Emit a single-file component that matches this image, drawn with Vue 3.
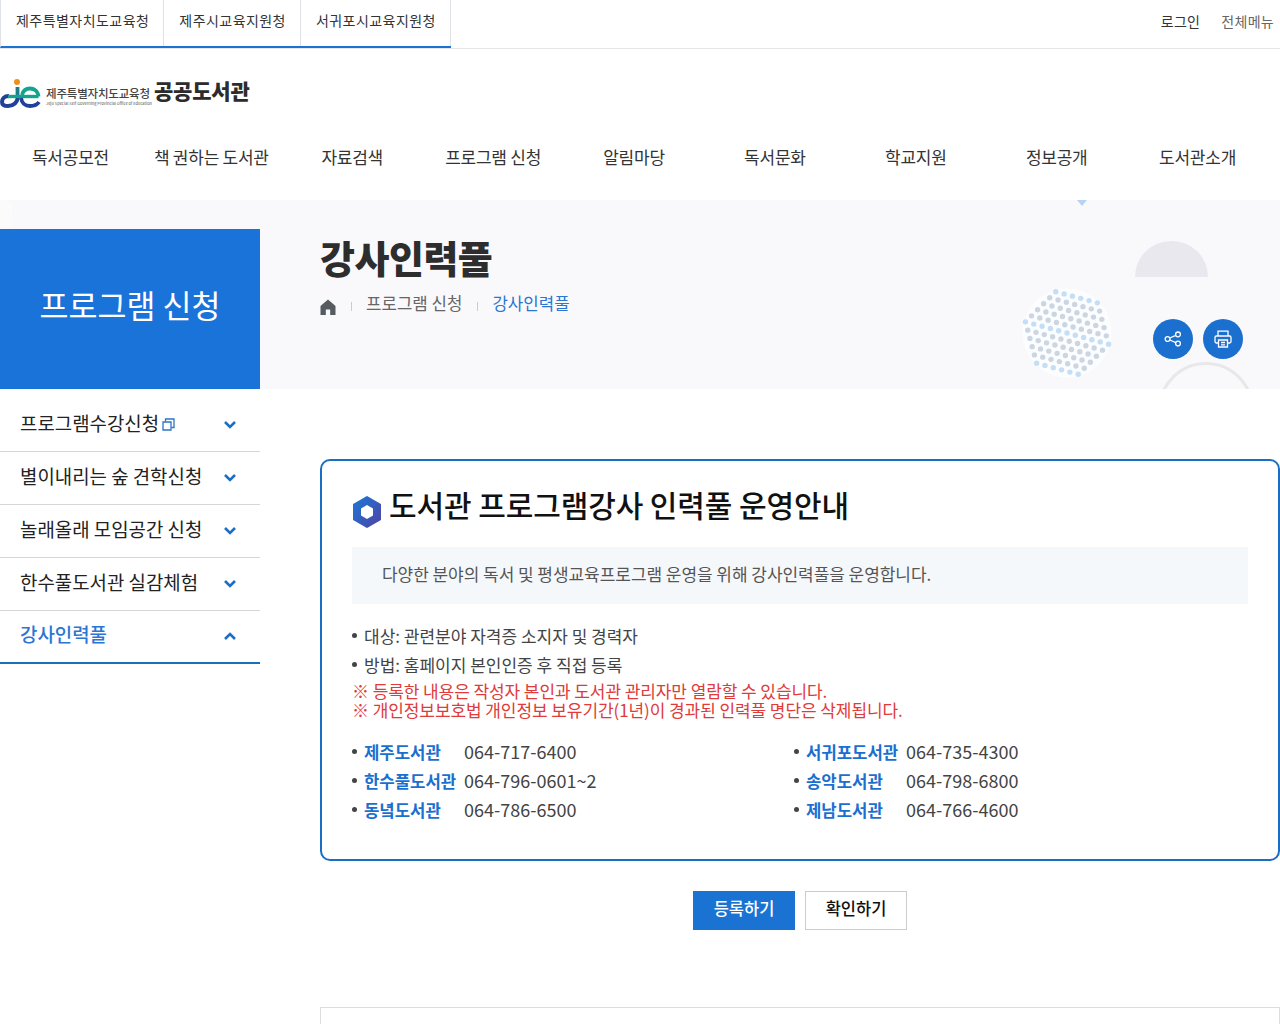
<template>
  <div class="page">
    <header class="topbar">
      <ul class="tabs">
        <li v-for="tab in tabs" :key="tab">{{ tab }}</li>
      </ul>
      <div class="util">
        <span>로그인</span>
        <span class="all">전체메뉴</span>
      </div>
    </header>

    <div class="logo-row">
      <svg class="logo-mark" width="42" height="32" viewBox="0 0 42 32" fill="none">
        <circle cx="17" cy="5" r="3" fill="#ee8f1c" />
        <path d="M17.5 10 V20" stroke="#1b7d8a" stroke-width="3.8" />
        <path d="M9 19 C4 19 2 22 2 25 C2 28 5 29 8 29 C13 29 17 26 18 20" stroke="#21409a" stroke-width="4" />
        <path d="M8 19.5 H38.5" stroke="#12a58c" stroke-width="3.4" />
        <path d="M38.5 19.5 C38 14 34 11.5 30 11.5 C26 11.5 23 14 22 18" stroke="#12a58c" stroke-width="3.8" />
        <path d="M21 21 C22 27 26 29 30 29 C34 29 37 28 39 25" stroke="#21409a" stroke-width="3.8" />
      </svg>
      <div class="logo-org">
        <strong>제주특별자치도교육청</strong>
        <small>Jeju Special Self Governing Provincial Office of Education</small>
      </div>
      <div class="logo-name">공공도서관</div>
    </div>

    <nav class="gnb">
      <a v-for="menu in menus" :key="menu">{{ menu }}</a>
    </nav>

    <section class="hero">
      <span class="blob"></span>
      <span class="marker"></span>
      <div class="hero-side">프로그램 신청</div>
      <div class="hero-text">
        <h1>강사인력풀</h1>
        <div class="crumbs">
          <svg width="16" height="16" viewBox="0 0 16 16">
            <path d="M8 .5 L15.5 7 V16 H10.2 V10.5 H5.8 V16 H.5 V7 Z" fill="#555b60" />
          </svg>
          <i></i>
          <span>프로그램 신청</span>
          <i></i>
          <span class="now">강사인력풀</span>
        </div>
      </div>

      <div class="half"></div>
      <svg class="dots" width="90" height="90" viewBox="0 0 90 90">
        <circle cx="45" cy="45" r="44.5" fill="#fcfdfe" />
        <circle
          v-for="d in dots"
          :key="d.key"
          :cx="d.x"
          :cy="d.y"
          r="2.7"
          :fill="d.fill"
        />
      </svg>
      <div class="ring"></div>
      <div class="actions">
        <button>
          <svg width="18" height="18" viewBox="0 0 18 18" fill="none" stroke="#fff" stroke-width="1.3">
            <circle cx="3.6" cy="9" r="2.4" />
            <circle cx="14" cy="4.4" r="2.4" />
            <circle cx="14" cy="13.6" r="2.4" />
            <path d="M5.8 8 L11.8 5.4 M5.8 10 L11.8 12.6" />
          </svg>
        </button>
        <button>
          <svg width="18" height="18" viewBox="0 0 18 18" fill="none" stroke="#fff" stroke-width="1.3">
            <path d="M4 6 V1.2 H14 V6" />
            <path d="M4 13 H2.4 C1.4 13 1 12.5 1 11.6 V7.4 C1 6.5 1.4 6 2.4 6 H15.6 C16.6 6 17 6.5 17 7.4 V11.6 C17 12.5 16.6 13 15.6 13 H14" />
            <path d="M4.5 10 H13.5 V17 H4.5 Z" />
            <path d="M7 12.5 H11 M7 14.8 H11" />
          </svg>
        </button>
      </div>
    </section>

    <div class="body">
      <aside class="side">
        <a v-for="item in sideItems" :key="item.label" :class="{ on: item.on }">
          <span class="label">
            {{ item.label }}
            <svg v-if="item.ext" width="13" height="13" viewBox="0 0 13 13" fill="none" stroke="#2a76c6" stroke-width="1.3">
              <path d="M1 4 H9 V12 H1 Z" />
              <path d="M3.5 3.5 V1 H12 V9.5 H9.5" />
            </svg>
          </span>
          <svg class="chev" width="12" height="8" viewBox="0 0 12 8" fill="none" stroke="#1a6fc4" stroke-width="2.6">
            <path :d="item.on ? 'M1 7 L6 2 L11 7' : 'M1 1 L6 6 L11 1'" />
          </svg>
        </a>
      </aside>

      <main class="main">
        <div class="card">
          <h2>
            <svg width="30" height="34" viewBox="0 0 30 34">
              <defs>
                <linearGradient id="hexfill" x1="0" y1="0" x2="1" y2="1">
                  <stop offset="0" stop-color="#1b78d6" />
                  <stop offset="1" stop-color="#4f43a6" />
                </linearGradient>
              </defs>
              <path d="M15 2 L28 9.5 V24.5 L15 32 L2 24.5 V9.5 Z" fill="url(#hexfill)" stroke="url(#hexfill)" stroke-width="2" stroke-linejoin="round" />
              <path d="M15 10 L21 13.5 V20.5 L15 24 L9 20.5 V13.5 Z" fill="#fff" />
            </svg>
            도서관 프로그램강사 인력풀 운영안내
          </h2>
          <p class="lead">다양한 분야의 독서 및 평생교육프로그램 운영을 위해 강사인력풀을 운영합니다.</p>
          <ul class="info">
            <li>대상: 관련분야 자격증 소지자 및 경력자</li>
            <li>방법: 홈페이지 본인인증 후 직접 등록</li>
          </ul>
          <p class="notice">※ 등록한 내용은 작성자 본인과 도서관 관리자만 열람할 수 있습니다.<br />※ 개인정보보호법 개인정보 보유기간(1년)이 경과된 인력풀 명단은 삭제됩니다.</p>
          <ul class="contacts">
            <li v-for="c in contacts" :key="c.name">
              <b>{{ c.name }}</b>
              <span>{{ c.tel }}</span>
            </li>
          </ul>
        </div>
        <div class="btns">
          <button class="primary">등록하기</button>
          <button>확인하기</button>
        </div>
        <div class="next-box"></div>
      </main>
    </div>
  </div>
</template>

<script setup>
const tabs = ['제주특별자치도교육청', '제주시교육지원청', '서귀포시교육지원청']
const menus = ['독서공모전', '책 권하는 도서관', '자료검색', '프로그램 신청', '알림마당', '독서문화', '학교지원', '정보공개', '도서관소개']

const sideItems = [
  { label: '프로그램수강신청', ext: true },
  { label: '별이내리는 숲 견학신청' },
  { label: '놀래올래 모임공간 신청' },
  { label: '한수풀도서관 실감체험' },
  { label: '강사인력풀', on: true }
]

const contacts = [
  { name: '제주도서관', tel: '064-717-6400' },
  { name: '서귀포도서관', tel: '064-735-4300' },
  { name: '한수풀도서관', tel: '064-796-0601~2' },
  { name: '송악도서관', tel: '064-798-6800' },
  { name: '동녘도서관', tel: '064-786-6500' },
  { name: '제남도서관', tel: '064-766-4600' }
]

// hex lattice of dots, turned a little and clipped to a circle
const dots = []
const turn = (15 * Math.PI) / 180
for (let row = -8; row <= 8; row++) {
  for (let col = -8; col <= 8; col++) {
    const lx = col * 8.6 + (row % 2 ? 4.3 : 0)
    const ly = row * 7.4
    const x = 45 + lx * Math.cos(turn) - ly * Math.sin(turn)
    const y = 45 + lx * Math.sin(turn) + ly * Math.cos(turn)
    if (Math.hypot(x - 45, y - 45) > 44) continue
    dots.push({
      key: row + '/' + col,
      x,
      y,
      fill: (Math.abs(row * 3 + col * 5) % 5 === 0) ? '#c4def6' : '#ccd6e3'
    })
  }
}
</script>

<style scoped>
.page {
  height: 1024px;
  overflow: hidden;
  font-family: "Noto Sans CJK KR", "Noto Sans", sans-serif;
  color: #222;
}

.topbar {
  display: flex;
  justify-content: space-between;
  height: 48px;
  border-bottom: 1px solid #e6e6e6;
}
.tabs {
  display: flex;
  margin: 0;
  padding: 0;
  list-style: none;
  height: 48px;
  border-left: 1px solid #dfe3e8;
  border-bottom: 2px solid #1a73d2;
  box-sizing: border-box;
}
.tabs li {
  padding: 0 14px 0 15px;
  line-height: 41px;
  font-size: 14px;
  letter-spacing: 0.45px;
  border-right: 1px solid #dfe3e8;
  color: #333;
}
.util {
  display: flex;
  gap: 21px;
  padding-right: 6px;
  font-size: 14px;
  letter-spacing: 0.3px;
  line-height: 42px;
  color: #333;
}
.util .all {
  color: #666;
}

.logo-row {
  display: flex;
  align-items: flex-start;
  height: 82px;
  padding-top: 28px;
  box-sizing: border-box;
}
.logo-mark {
  flex: none;
  margin-right: 4px;
}
.logo-org {
  margin-top: 9px;
  width: 108px;
}
.logo-org strong {
  display: block;
  font-size: 11.5px;
  line-height: 14px;
  font-weight: 500;
  color: #444;
  white-space: nowrap;
  letter-spacing: -0.2px;
}
.logo-org small {
  display: block;
  font-size: 4px;
  line-height: 6px;
  color: #555;
  white-space: nowrap;
}
.logo-name {
  font-size: 21px;
  line-height: 27px;
  font-weight: 900;
  color: #2c2c2c;
  letter-spacing: -0.2px;
}

.gnb {
  display: grid;
  grid-template-columns: repeat(9, 140.9px);
  height: 69px;
  box-sizing: border-box;
  padding-top: 15px;
}
.gnb a {
  text-align: center;
  font-size: 17px;
  letter-spacing: -0.25px;
  line-height: 22px;
  color: #333;
}

.hero {
  position: relative;
  display: flex;
  height: 189px;
  overflow: hidden;
  background: #f9f9fb;
}
.blob {
  position: absolute;
  left: 0;
  top: 0;
  width: 12px;
  height: 29px;
  border-radius: 0 8px 8px 0;
  background: #fbfbfc;
}
.marker {
  position: absolute;
  left: 1077px;
  top: 0;
  border-top: 6px solid #b5d4f5;
  border-left: 5px solid transparent;
  border-right: 5px solid transparent;
}
.hero-side {
  width: 260px;
  height: 160px;
  margin-top: 29px;
  background: #1a73d9;
  color: #fff;
  font-size: 31.5px;
  font-weight: 400;
  line-height: 150px;
  text-align: center;
}
.hero-text {
  margin-left: 60px;
  padding-top: 31px;
}
.hero-text h1 {
  margin: 0;
  font-size: 38px;
  line-height: 52px;
  font-weight: 900;
  color: #2d2d2d;
  letter-spacing: -0.5px;
}
.crumbs {
  display: flex;
  align-items: center;
  margin-top: 5px;
  font-size: 16.8px;
  line-height: 30px;
  color: #666;
}
.crumbs svg {
  margin-top: 8px;
}
.crumbs i {
  width: 1px;
  height: 9px;
  margin: 6px 14.5px 0;
  background: #ccc;
}
.crumbs .now {
  color: #2a76d2;
}
.half {
  position: absolute;
  left: 1135px;
  top: 41px;
  width: 73px;
  height: 36px;
  border-radius: 37px 37px 0 0;
  background: #e9e8ef;
}
.dots {
  position: absolute;
  left: 1022px;
  top: 88px;
}
.ring {
  position: absolute;
  left: 1158px;
  top: 162px;
  width: 90px;
  height: 90px;
  border: 3px solid #e8e8e8;
  border-radius: 50%;
}
.actions {
  position: absolute;
  left: 1153px;
  top: 119px;
  display: flex;
  gap: 10px;
}
.actions button {
  display: flex;
  align-items: center;
  justify-content: center;
  width: 40px;
  height: 40px;
  padding: 0;
  border: 0;
  border-radius: 50%;
  background: #1a6fcf;
}

.body {
  display: flex;
}
.side {
  flex: none;
  width: 260px;
  padding-top: 10px;
  align-self: flex-start;
  border-bottom: 2px solid #1a6fb8;
}
.side a {
  display: flex;
  align-items: center;
  justify-content: space-between;
  height: 53px;
  padding: 0 24px 1px 20px;
  box-sizing: border-box;
  border-bottom: 1px solid #d6d6d6;
  font-size: 18.9px;
  color: #222;
}
.side a:last-child {
  border-bottom: 0;
  height: 51px;
}
.side a.on {
  color: #2a76d2;
  font-weight: 500;
}
.side .label {
  margin-bottom: 5px;
}
.side .label svg {
  margin-left: -1px;
  vertical-align: 0;
}

.main {
  flex: none;
  width: 960px;
  margin-left: 60px;
  padding-top: 70px;
}
.card {
  height: 402px;
  box-sizing: border-box;
  padding: 23px 30px 0;
  border: 2px solid #1a6fc4;
  border-radius: 10px;
}
.card h2 {
  display: flex;
  align-items: flex-start;
  gap: 7px;
  height: 40px;
  margin: 0;
  font-size: 30px;
  line-height: 40px;
  font-weight: 500;
  color: #111;
  letter-spacing: -0.1px;
}
.card h2 svg {
  flex: none;
  margin-top: 11px;
}
.lead {
  margin: 23px 0 0;
  padding: 0 30px;
  height: 57px;
  background: #f5f8fb;
  font-size: 17px;
  letter-spacing: -0.05px;
  line-height: 53px;
  color: #555;
}
.info {
  margin: 17px 0 0;
  padding: 0;
  list-style: none;
  font-size: 17px;
  line-height: 29px;
  color: #444;
}
.info li,
.contacts li {
  position: relative;
  padding-left: 12px;
}
.info li::before,
.contacts li::before {
  content: "";
  position: absolute;
  left: 0;
  top: 12px;
  width: 5px;
  height: 5px;
  border-radius: 50%;
  background: #444;
}
.notice {
  margin: 2px 0 0;
  font-size: 17px;
  letter-spacing: -0.08px;
  line-height: 19px;
  color: #e03a3a;
}
.contacts {
  display: grid;
  grid-template-columns: 442px 442px;
  grid-auto-rows: 29px;
  margin: 18px 0 0;
  padding: 0;
  list-style: none;
  font-size: 18px;
  line-height: 29px;
  color: #444;
}
.contacts b {
  display: inline-block;
  width: 100px;
  color: #1a6fcf;
  font-weight: 700;
  font-size: 16.7px;
  white-space: nowrap;
}
.btns {
  display: flex;
  justify-content: center;
  gap: 10px;
  margin-top: 30px;
}
.btns button {
  width: 102px;
  height: 39px;
  padding: 0 0 6px;
  border: 1px solid #ccc;
  background: #fff;
  font: inherit;
  font-size: 16.5px;
  font-weight: 500;
  color: #111;
}
.btns button.primary {
  border-color: #1a73d2;
  background: #1a73d2;
  color: #fff;
}
.next-box {
  height: 200px;
  margin-top: 77px;
  border: 1px solid #ddd;
}
</style>

<style>
html,
body {
  margin: 0;
  background: #fff;
}
</style>
